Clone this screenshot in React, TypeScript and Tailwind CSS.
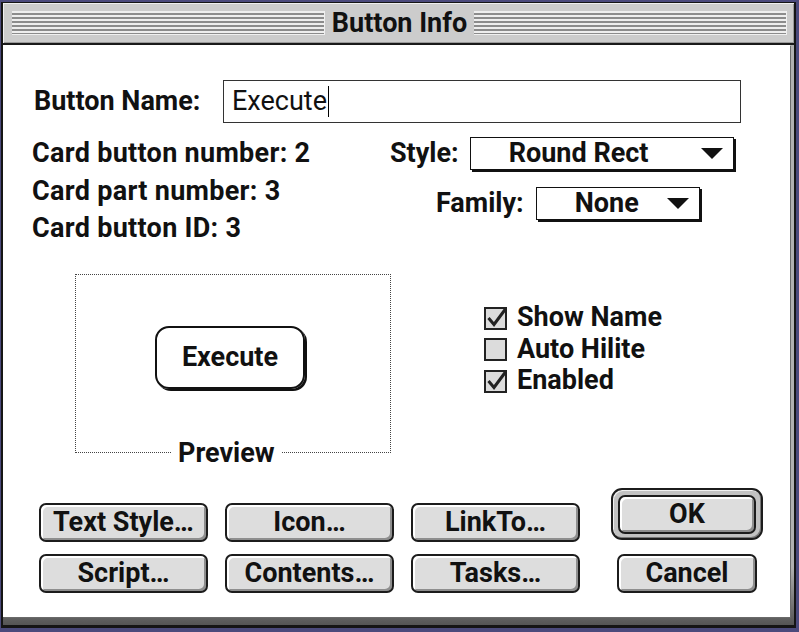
import React from 'react';

function MacButton({ label, className }: { label: string; className?: string }) {
    return (
        <div
            className={`flex items-center justify-center h-[39px] rounded-[7px] border-2 border-[#1c1c1c] bg-[#dddddd] shadow-[inset_2px_2px_0_#ffffff,inset_-2px_-2px_0_#8e8e8e] text-[27px] font-bold leading-none ${className ?? ''}`}
        >
            {label}
        </div>
    );
}

function Popup({ value, className }: { value: string; className: string }) {
    return (
        <div className={`flex items-center h-[33px] border border-[#111] bg-white shadow-[2px_2px_0_#111] pl-[38px] pr-[10px] ${className}`}>
            <span className="text-[27px] font-bold leading-none">{value}</span>
            <svg className="ml-auto" width="22" height="11" viewBox="0 0 22 11">
                <polygon points="0,0 22,0 11,11" fill="#111" />
            </svg>
        </div>
    );
}

function CheckBox({ checked }: { checked: boolean }) {
    return (
        <svg width="24" height="24" viewBox="0 0 24 24">
            <rect x="1" y="2" width="21" height="21" fill="#dcdcdc" stroke="#222" strokeWidth="2" />
            {checked && <path d="M4.5 12 L10 18.5 L21.5 3" fill="none" stroke="#222" strokeWidth="3" />}
        </svg>
    );
}

function Stripes() {
    return (
        <div className="flex-1 h-[24px] border-b border-r border-[#f0f0f0] bg-[repeating-linear-gradient(to_bottom,#eeeeee_0px,#eeeeee_2px,#8c8c8c_2px,#8c8c8c_4px)]" />
    );
}

export default function App() {
    const checks = [
        { label: 'Show Name', checked: true },
        { label: 'Auto Hilite', checked: false },
        { label: 'Enabled', checked: true },
    ];

    return (
        <div className="w-[799px] h-[632px] bg-[#4b4a7c] pt-[2px] pl-[1px] font-['Roboto',sans-serif] text-[#111]">
            <div className="w-[795px] h-[626px] border-t border-l-2 border-r-2 border-b-[3px] border-[#151515] flex flex-col bg-[#cccccc]">
                {/* title bar */}
                <div className="h-[40px] flex items-center pl-[9px] pr-[7px] bg-[#cccccc] shadow-[inset_1px_1px_0_#efefef,inset_-1px_-1px_0_#9a9a9a]">
                    <Stripes />
                    <div className="px-[7px] text-[27px] font-bold leading-none">Button Info</div>
                    <Stripes />
                </div>
                <div className="h-[2px] bg-[#1a1a1a]" />

                <div className="flex-1 flex flex-col bg-[linear-gradient(to_bottom,#b0b0b0_90%,#555555)]">
                    <div className="flex-1 flex flex-col bg-white mr-[4px] mb-[8px] shadow-[1px_1px_0_#6a6a6a]">
                        {/* name row */}
                        <div className="flex items-center mt-[35px]">
                            <div className="w-[220px] shrink-0 whitespace-nowrap pl-[31px] text-[27px] font-bold leading-none">Button Name:</div>
                            <div className="flex items-center shrink-0 w-[518px] h-[43px] border border-[#333] pl-[8px]">
                                <span className="text-[27px] leading-none">Execute</span>
                                <span className="w-[1px] h-[31px] bg-black ml-[1px]" />
                            </div>
                        </div>

                        {/* info + style */}
                        <div className="flex mt-[12px] h-[113px]">
                            <div className="w-[358px] shrink-0 ml-[29px] flex flex-col text-[27px] font-bold leading-none whitespace-nowrap tracking-[0.3px]">
                                <div className="h-[37.5px] flex items-center">Card button number: 2</div>
                                <div className="h-[37.5px] flex items-center">Card part number: 3</div>
                                <div className="h-[37.5px] flex items-center">Card button ID: 3</div>
                            </div>
                            <div className="flex flex-col pt-[2px]">
                                <div className="flex items-center">
                                    <span className="text-[27px] font-bold leading-none">Style:</span>
                                    <Popup value="Round Rect" className="ml-[11px] w-[264px]" />
                                </div>
                                <div className="flex items-center mt-[17px] ml-[46px]">
                                    <span className="text-[27px] font-bold leading-none">Family:</span>
                                    <Popup value="None" className="ml-[12px] w-[164px]" />
                                </div>
                            </div>
                        </div>

                        {/* preview + checkboxes */}
                        <div className="flex mt-[26px] h-[179px]">
                            <div className="relative shrink-0 ml-[72px] w-[316px] h-[179px] border-[1.5px] border-dotted border-[#444]">
                                <div className="ml-[79px] mt-[51px] w-[150px] h-[63px] rounded-[14px] border-2 border-[#111] shadow-[2px_2px_0_#111] flex items-center justify-center text-[27px] font-bold leading-none">
                                    Execute
                                </div>
                                <div className="absolute left-[96px] top-[166px] h-[24px] px-[6px] bg-white flex items-center text-[27px] font-bold leading-none">
                                    Preview
                                </div>
                            </div>
                            <div className="ml-[93px] pt-[28px] flex flex-col">
                                {checks.map((c) => (
                                    <div key={c.label} className="h-[31.5px] flex items-center gap-[9px]">
                                        <CheckBox checked={c.checked} />
                                        <span className="text-[27px] font-bold leading-none">{c.label}</span>
                                    </div>
                                ))}
                            </div>
                        </div>

                        {/* buttons */}
                        <div className="flex mt-[35px]">
                            <div className="ml-[36px] mt-[15px] grid grid-cols-[169px_169px_169px] gap-x-[17px] gap-y-[12px]">
                                <MacButton label="Text Style…" />
                                <MacButton label="Icon…" />
                                <MacButton label="LinkTo…" />
                                <MacButton label="Script…" />
                                <MacButton label="Contents…" />
                                <MacButton label="Tasks…" />
                            </div>
                            <div className="ml-[31px] flex flex-col items-center">
                                <div className="w-[152px] h-[52px] rounded-[11px] border-2 border-[#1c1c1c] bg-[#c2c2c2] shadow-[inset_1px_1px_0_#f0f0f0,inset_-1px_-1px_0_#777] p-[5px]">
                                    <MacButton label="OK" className="h-[38px]" />
                                </div>
                                <MacButton label="Cancel" className="mt-[14px] w-[140px]" />
                            </div>
                        </div>
                    </div>
                </div>
            </div>
        </div>
    );
}
